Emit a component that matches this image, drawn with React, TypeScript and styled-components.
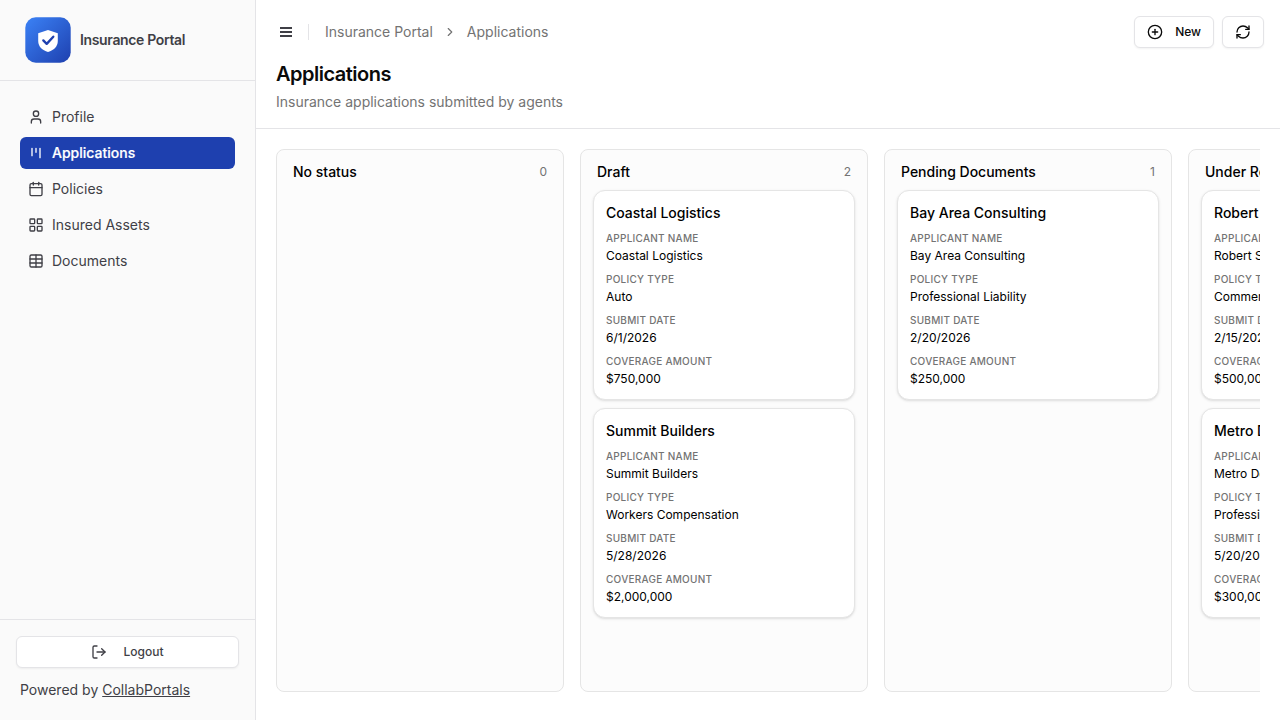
import React from "react";
import styled, { createGlobalStyle } from "styled-components";
import {
  User, Calendar, LayoutGrid, Table, LogOut, ChevronRight, CirclePlus, RefreshCw,
} from "lucide-react";

const GlobalStyle = createGlobalStyle`
  *, *::before, *::after { box-sizing: border-box; }
  body { margin: 0; font-family: Inter, "Liberation Sans", sans-serif; font-size: 14px; line-height: 20px; color: #0a0a0a; background: #fff; }
  button { font: inherit; }
`;

const Shell = styled.div`
  display: flex;
  width: 100%;
  height: 100vh;
  overflow: hidden;
`;

const Sidebar = styled.aside`
  width: 256px;
  flex: none;
  display: flex;
  flex-direction: column;
  background: #fafafa;
  border-right: 1px solid #e4e4e7;
  color: #3f3f46;
`;

const Brand = styled.div`
  height: 81px;
  display: flex;
  align-items: center;
  gap: 8px;
  padding: 0 24px;
  border-bottom: 1px solid #e4e4e7;
  font-weight: 600;
  letter-spacing: -0.35px;
`;

const Nav = styled.nav`
  flex: 1;
  display: flex;
  flex-direction: column;
  gap: 4px;
  padding: 20px;
`;

const NavItem = styled.a<{ $active?: boolean }>`
  display: flex;
  align-items: center;
  gap: 8px;
  height: 32px;
  padding: 0 8px;
  border-radius: 6px;
  background: ${(p) => (p.$active ? "#1e40af" : "transparent")};
  color: ${(p) => (p.$active ? "#fff" : "#3f3f46")};
  font-weight: ${(p) => (p.$active ? 500 : 400)};
  -webkit-text-stroke: ${(p) => (p.$active ? "0.2px #fff" : "0")};
`;

const SidebarFooter = styled.div`
  height: 101px;
  padding: 16px;
  border-top: 1px solid #e4e4e7;
`;

const Button = styled.button<{ $wide?: boolean }>`
  display: inline-flex;
  align-items: center;
  justify-content: center;
  gap: ${(p) => (p.$wide ? "16px" : "12px")};
  width: ${(p) => (p.$wide ? "100%" : "auto")};
  height: 32px;
  padding: 0 12px;
  border: 1px solid #e4e4e7;
  border-radius: 6px;
  background: #fff;
  box-shadow: 0 1px 2px rgba(0, 0, 0, 0.05);
  color: ${(p) => (p.$wide ? "#3f3f46" : "#0a0a0a")};
  font-size: 12px;
  line-height: 16px;
  font-weight: 500;
`;

const Powered = styled.p`
  margin: 12px 4px 0;
  a { text-decoration: underline; }
`;

const Main = styled.main`
  flex: 1;
  min-width: 0;
  display: flex;
  flex-direction: column;
`;

const Header = styled.header`
  height: 129px;
  flex: none;
  padding: 16px 16px 0 20px;
  border-bottom: 1px solid #e4e4e7;
`;

const TopBar = styled.div`
  display: flex;
  align-items: center;
  height: 32px;
  color: #71717a;
`;

const MenuIcon = styled.svg`
  margin: 0 14px 0 2px;
`;

const Divider = styled.span`
  width: 1px;
  height: 16px;
  margin-right: 16px;
  background: #e4e4e7;
`;

const Crumbs = styled.div`
  flex: 1;
  display: flex;
  align-items: center;
  gap: 10px;
  color: #737373;
`;

const Actions = styled.div`
  display: flex;
  gap: 8px;
`;

const Title = styled.h1`
  margin: 12px 0 0;
  font-size: 20px;
  line-height: 28px;
  font-weight: 600;
  letter-spacing: -0.5px;
`;

const Subtitle = styled.p`
  margin: 4px 0 0;
  color: #737373;
`;

const Board = styled.section`
  flex: 1;
  display: flex;
  gap: 16px;
  margin: 20px 20px 28px;
  overflow: hidden;
`;

const Column = styled.div`
  width: 288px;
  flex: none;
  padding: 12px;
  border: 1px solid #e5e5e5;
  border-radius: 8px;
  background: #fcfcfc;
`;

const ColumnHead = styled.div`
  display: flex;
  align-items: center;
  justify-content: space-between;
  height: 20px;
  margin-bottom: 8px;
  padding: 0 4px;
  font-weight: 500;
  color: #000;
`;

const Count = styled.span`
  font-size: 12px;
  font-weight: 400;
  color: #737373;
`;

const Card = styled.article`
  height: 210px;
  width: 262px;
  margin-bottom: 8px;
  padding: 12px;
  border: 1px solid #e5e5e5;
  border-radius: 12px;
  background: #fff;
  box-shadow: 0 1px 3px rgba(0, 0, 0, 0.1), 0 1px 2px -1px rgba(0, 0, 0, 0.1);
  color: #000;
  white-space: nowrap;
`;

const CardTitle = styled.h3`
  margin: 0 0 8px;
  font-size: 14px;
  line-height: 20px;
  font-weight: 500;
`;

const Field = styled.div`
  height: 33px;
  margin-bottom: 8px;
`;

const Label = styled.div`
  font-size: 10px;
  line-height: 15px;
  font-weight: 500;
  letter-spacing: 0.25px;
  text-transform: uppercase;
  color: #737373;
`;

const Value = styled.div`
  margin-top: 2px;
  font-size: 12px;
  line-height: 16px;
`;

const Logo = () => (
  <svg width="48" height="48" viewBox="0 0 48 48">
    <defs>
      <linearGradient id="brand" x1="0" y1="0" x2="1" y2="1">
        <stop offset="0" stopColor="#3b82f6" />
        <stop offset="1" stopColor="#1e40af" />
      </linearGradient>
    </defs>
    <rect x="1.3" y="1.3" width="45.4" height="45.4" rx="10.5" fill="url(#brand)" />
    <path d="M24 14 33.8 17.3V25C33.8 30.5 29.8 34.3 24 36 18.2 34.3 14.2 30.5 14.2 25V17.3Z" fill="#fff" />
    <path d="m19.3 24.4 3.4 3.5 6.6-7.2" fill="none" stroke="#1e40af" strokeWidth="2.3" strokeLinecap="round" strokeLinejoin="round" />
  </svg>
);

const KanbanIcon = ({ size = 16 }: { size?: number }) => (
  <svg width={size} height={size} viewBox="0 0 24 24" fill="none" stroke="currentColor" strokeWidth="2" strokeLinecap="round">
    <path d="M6 5v11M12 5v6M18 5v14" />
  </svg>
);

const nav = [
  { label: "Profile", Icon: User },
  { label: "Applications", Icon: KanbanIcon, active: true },
  { label: "Policies", Icon: Calendar },
  { label: "Insured Assets", Icon: LayoutGrid },
  { label: "Documents", Icon: Table },
];

const fieldNames = ["Applicant Name", "Policy Type", "Submit Date", "Coverage Amount"];

const columns = [
  { name: "No status", cards: [] },
  {
    name: "Draft",
    cards: [
      ["Coastal Logistics", "Auto", "6/1/2026", "$750,000"],
      ["Summit Builders", "Workers Compensation", "5/28/2026", "$2,000,000"],
    ],
  },
  { name: "Pending Documents", cards: [["Bay Area Consulting", "Professional Liability", "2/20/2026", "$250,000"]] },
  {
    name: "Under Review",
    cards: [
      ["Robert Smith", "Commercial", "2/15/2026", "$500,000"],
      ["Metro Design", "Professional Liability", "5/20/2026", "$300,000"],
    ],
  },
];

export default function App() {
  return (
    <Shell>
      <GlobalStyle />
      <Sidebar>
        <Brand><Logo />Insurance Portal</Brand>
        <Nav>
          {nav.map(({ label, Icon, active }) => (
            <NavItem key={label} $active={active}><Icon size={16} />{label}</NavItem>
          ))}
        </Nav>
        <SidebarFooter>
          <Button $wide><LogOut size={16} />Logout</Button>
          <Powered>Powered by <a>CollabPortals</a></Powered>
        </SidebarFooter>
      </Sidebar>
      <Main>
        <Header>
          <TopBar>
            <MenuIcon width="16" height="16" viewBox="0 0 16 16" stroke="#3f3f46" strokeWidth="1.9">
              <path d="M2 4h12M2 8h12M2 12h12" />
            </MenuIcon>
            <Divider />
            <Crumbs>
              <span>Insurance Portal</span><ChevronRight size={14} /><span>Applications</span>
            </Crumbs>
            <Actions>
              <Button><CirclePlus size={16} />New</Button>
              <Button><RefreshCw size={16} /></Button>
            </Actions>
          </TopBar>
          <Title>Applications</Title>
          <Subtitle>Insurance applications submitted by agents</Subtitle>
        </Header>
        <Board>
          {columns.map((col) => (
            <Column key={col.name}>
              <ColumnHead>{col.name}<Count>{col.cards.length}</Count></ColumnHead>
              {col.cards.map((card) => (
                <Card key={card[0]}>
                  <CardTitle>{card[0]}</CardTitle>
                  {card.map((value, i) => (
                    <Field key={fieldNames[i]}><Label>{fieldNames[i]}</Label><Value>{value}</Value></Field>
                  ))}
                </Card>
              ))}
            </Column>
          ))}
        </Board>
      </Main>
    </Shell>
  );
}
